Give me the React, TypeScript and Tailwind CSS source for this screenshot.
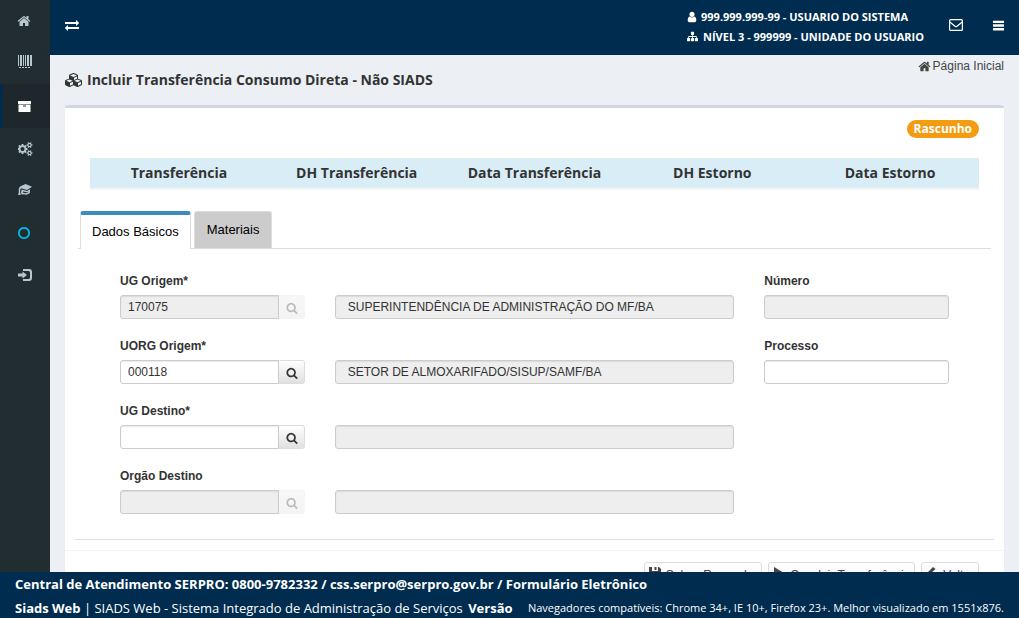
import { ReactNode } from "react";
import clsx from "clsx";

type TIcon = {
  d: string;
  viewBox?: string;
  className?: string;
};

const Icon = ({ d, viewBox = "0 0 1792 1792", className }: TIcon) => (
  <svg viewBox={viewBox} className={clsx("shrink-0", className)} fill="currentColor" aria-hidden="true">
    <path d={d} />
  </svg>
);

const icons = {
  home: "M1472 992v480q0 26-19 45t-45 19h-384v-384h-256v384h-384q-26 0-45-19t-19-45v-480q0-1 .5-3t.5-3l575-474 575 474q1 2 1 6zm223-69l-62 74q-8 9-21 11h-3q-13 0-21-7l-692-577-692 577q-12 8-24 7-13-2-21-11l-62-74q-8-10-7-23.5t11-21.5l719-599q32-26 76-26t76 26l244 204v-195q0-14 9-23t23-9h192q14 0 23 9t9 23v408l219 182q10 8 11 21.5t-7 23.5z",
  barcode: "M0 0h1v11h-1zM2 0h2v11h-2zM5 0h1v11h-1zM7 0h1v11h-1zM9 0h2v11h-2zM12 0h2v11h-2zM1 12h2v1h-2zM4 12h2v1h-2zM7 12h2v1h-2zM10 12h2v1h-2z",
  archive: "M0 0h13v3h-13zM.500 3.500h12v7.500h-12zM5 4.500v1h3v-1z",
  cogs: "M832 896q0-106-75-181t-181-75-181 75-75 181 75 181 181 75 181-75 75-181zm768 512q0-52-38-90t-90-38-90 38-38 90q0 53 37.5 90.5t90.5 37.5 90.5-37.5 37.5-90.5zm0-1024q0-52-38-90t-90-38-90 38-38 90q0 53 37.5 90.5t90.5 37.5 90.5-37.5 37.5-90.5zm-384 421v185q0 10-7 19.5t-16 10.5l-155 24q-11 35-32 76 34 48 90 115 7 10 7 20 0 12-7 19-23 30-82.5 89.5t-78.5 59.5q-11 0-21-7l-115-90q-37 19-77 31-11 108-23 155-7 24-30 24h-186q-11 0-20-7.5t-10-17.5l-23-153q-34-10-75-31l-118 89q-7 7-20 7-11 0-21-8-144-133-144-160 0-9 7-19 10-14 41-53t47-61q-23-44-35-82l-152-24q-10-1-17-9.5t-7-19.5v-185q0-10 7-19.5t16-10.5l155-24q11-35 32-76-34-48-90-115-7-11-7-20 0-12 7-20 22-30 82-89t79-59q11 0 21 7l115 90q34-18 77-32 11-108 23-154 7-24 30-24h186q11 0 20 7.5t10 17.5l23 153q34 10 75 31l118-89q8-7 20-7 11 0 21 8 144 133 144 160 0 9-7 19-12 16-42 54t-45 60q23 48 34 82l152 23q10 2 17 10.5t7 19.5zm640 533v140q0 16-149 31-12 27-30 52 51 113 51 138 0 4-4 7-122 71-124 71-8 0-46-47t-52-68q-20 2-30 2t-30-2q-14 21-52 68t-46 47q-2 0-124-71-4-3-4-7 0-25 51-138-18-25-30-52-149-15-149-31v-140q0-16 149-31 13-29 30-52-51-113-51-138 0-4 4-7 4-2 35-20t59-34 30-16q8 0 46 46.5t52 67.5q20-2 30-2t30 2q51-71 92-112l6-2q4 0 124 70 4 3 4 7 0 25-51 138 17 23 30 52 149 15 149 31zm0-1024v140q0 16-149 31-12 27-30 52 51 113 51 138 0 4-4 7-122 71-124 71-8 0-46-47t-52-68q-20 2-30 2t-30-2q-14 21-52 68t-46 47q-2 0-124-71-4-3-4-7 0-25 51-138-18-25-30-52-149-15-149-31v-140q0-16 149-31 13-29 30-52-51-113-51-138 0-4 4-7 4-2 35-20t59-34 30-16q8 0 46 46.5t52 67.5q20-2 30-2t30 2q51-71 92-112l6-2q4 0 124 70 4 3 4 7 0 25-51 138 17 23 30 52 149 15 149 31z",
  education: "M7.500 0L14 2.800L9 6L3 4.200L2.200 5.500V8.500L2.800 11L0 11L.8 8.500V4.500L2 2.600zM3.600 5.400L9 7L12 5.300V8.600C10.500 10.600 8 11.200 6.200 10.200L4.200 10.400L3 9.400zM5 7.500L4.800 8.600L6 9C8 9.400 9.600 9 10.400 8V7.500L9 8.200z",
  circle: "M896 352q-148 0-273 73t-198 198-73 273 73 273 198 198 273 73 273-73 198-198 73-273-73-273-198-198-273-73zm768 544q0 209-103 385.5t-279.5 279.5-385.5 103-385.5-103-279.5-279.5-103-385.5 103-385.5 279.5-279.5 385.5-103 385.5 103 279.5 279.5 103 385.5z",
  logIn: "M5 0h6q3 0 3 3v6q0 3-3 3h-6v-2h5.500q1.500 0 1.500-1.500v-5q0-1.500-1.500-1.500h-5.500zM4.500 2.500l4.500 3.500l-4.500 3.500v-2h-4.500v-3h4.500z",
  exchange: "M1792 1184v192q0 13-9.5 22.5t-22.5 9.5h-1376v192q0 13-9.5 22.5t-22.5 9.5q-12 0-24-10l-319-320q-9-9-9-22 0-14 9-23l320-320q9-9 23-9 13 0 22.5 9.5t9.5 22.5v192h1376q13 0 22.5 9.5t9.5 22.5zm0-544q0 14-9 23l-320 320q-9 9-23 9-13 0-22.5-9.5t-9.5-22.5v-192h-1376q-13 0-22.5-9.5t-9.5-22.5v-192q0-13 9.5-22.5t22.5-9.5h1376v-192q0-14 9-23t23-9q12 0 24 10l319 319q9 9 9 23z",
  user: "M1536 1399q0 109-62.5 187t-150.5 78h-854q-88 0-150.5-78t-62.5-187q0-85 8.5-160.5t31.5-152 58.5-131 94-89 134.5-34.5q131 128 313 128t313-128q76 0 134.5 34.5t94 89 58.5 131 31.5 152 8.5 160.5zm-256-887q0 159-112.5 271.5t-271.5 112.5-271.5-112.5-112.5-271.5 112.5-271.5 271.5-112.5 271.5 112.5 112.5 271.5z",
  sitemap: "M1792 1248v320q0 40-28 68t-68 28h-320q-40 0-68-28t-28-68v-320q0-40 28-68t68-28h96v-192h-512v192h96q40 0 68 28t28 68v320q0 40-28 68t-68 28h-320q-40 0-68-28t-28-68v-320q0-40 28-68t68-28h96v-192h-512v192h96q40 0 68 28t28 68v320q0 40-28 68t-68 28h-320q-40 0-68-28t-28-68v-320q0-40 28-68t68-28h96v-192q0-52 38-90t90-38h512v-192h-96q-40 0-68-28t-28-68v-320q0-40 28-68t68-28h320q40 0 68 28t28 68v320q0 40-28 68t-68 28h-96v192h512q52 0 90 38t38 90v192h96q40 0 68 28t28 68z",
  bars: "M1664 1312v192q0 26-19 45t-45 19h-1408q-26 0-45-19t-19-45v-192q0-26 19-45t45-19h1408q26 0 45 19t19 45zm0-512v192q0 26-19 45t-45 19h-1408q-26 0-45-19t-19-45v-192q0-26 19-45t45-19h1408q26 0 45 19t19 45zm0-512v192q0 26-19 45t-45 19h-1408q-26 0-45-19t-19-45v-192q0-26 19-45t45-19h1408q26 0 45 19t19 45z",
  cubes: "M640 1632l384-192v-314l-384 164v342zm-64-454l404-173-404-173-404 173zm1088 454l384-192v-314l-384 164v342zm-64-454l404-173-404-173-404 173zm-448-293l384-165v-266l-384 164v267zm-64-379l441-189-441-189-441 189zm1088 518v416q0 36-19 67t-52 47l-448 224q-25 14-57 14t-57-14l-448-224q-5-2-7-4-2 2-7 4l-448 224q-25 14-57 14t-57-14l-448-224q-33-16-52-47t-19-67v-416q0-38 21.5-70t56.5-48l434-186v-400q0-38 21.5-70t56.5-48l448-192q23-10 50-10t50 10l448 192q35 16 56.5 48t21.5 70v400l434 186q36 16 57 48t21 70z",
  search: "M1216 832q0-185-131.5-316.5t-316.5-131.5-316.5 131.5-131.5 316.5 131.5 316.5 316.5 131.5 316.5-131.5 131.5-316.5zm512 832q0 52-38 90t-90 38q-54 0-90-38l-343-342q-179 124-399 124-143 0-273.5-55.5t-225-150-150-225-55.5-273.5 55.5-273.5 150-225 225-150 273.5-55.5 273.5 55.5 225 150 150 225 55.5 273.5q0 220-124 399l343 343q37 37 37 90z",
  save: "M0 0h3v4h6v-4h1l2 2v10h-12zM5.500 0h2v3h-2z",
  play: "M1 0l10 6l-10 6z",
  back: "M7 0l2.500 2l-4.500 4l4.500 4l-2.500 2l-6-6z",
};

const menu = [
  { label: "Início", d: icons.home, size: "size-[14px] -ml-px", viewBox: "0 0 1792 1792" },
  { label: "Código de barras", d: icons.barcode, size: "w-[14px] h-[13px] mb-1", viewBox: "0 0 14 13" },
  { label: "Almoxarifado", d: icons.archive, size: "w-[13px] h-[11px]", viewBox: "0 0 13 11", active: true },
  { label: "Configurações", d: icons.cogs, size: "w-[15px] h-[14px]", viewBox: "0 0 1920 1792" },
  { label: "Treinamento", d: icons.education, size: "w-[14px] h-[11px] mb-1", viewBox: "0 0 14 11" },
  { label: "Ambiente", d: icons.circle, size: "size-[14px] -ml-px text-[#00c0ef]", viewBox: "0 0 1792 1792" },
  { label: "Sair", d: icons.logIn, size: "w-[14px] h-[12px]", viewBox: "0 0 14 12" },
];

const columns = ["Transferência", "DH Transferência", "Data Transferência", "DH Estorno", "Data Estorno"];

const inputStyle =
  "block h-6 w-full min-w-0 rounded-[3px] border border-[#ccc] bg-white text-xs text-[#333] shadow-[inset_0_1px_1px_rgba(0,0,0,0.08)] outline-none disabled:bg-[#eee]";

type TField = {
  id: string;
  label: string;
  value?: string;
  disabled?: boolean;
};

const Field = ({ id, label, children }: { id: string; label: string; children: ReactNode }) => (
  <div>
    <label htmlFor={id} className="mb-1 block text-xs leading-5 font-bold">
      {label}
    </label>
    {children}
  </div>
);

const SearchField = ({ id, label, value, disabled }: TField) => (
  <Field id={id} label={label}>
    <div className="flex">
      <input id={id} defaultValue={value} disabled={disabled} className={clsx(inputStyle, "rounded-r-none px-[7px]")} />
      <button
        type="button"
        aria-label={`Pesquisar ${label}`}
        disabled={disabled}
        className="flex h-6 w-[26px] shrink-0 items-center justify-center rounded-r-[3px] border border-l-0 border-[#ddd] bg-linear-to-b from-white to-[#e0e0e0] pt-0.5 pl-px disabled:border-[#f4f4f4] disabled:from-[#f7f7f7] disabled:to-[#f4f4f4] disabled:text-[#bbb]"
      >
        <Icon d={icons.search} className="size-3" />
      </button>
    </div>
  </Field>
);

const Description = ({ label, value }: { label: string; value?: string }) => (
  <div className="col-span-2 flex items-end">
    <input aria-label={label} defaultValue={value} disabled className={clsx(inputStyle, "px-3")} />
  </div>
);

const ActionButton = ({ d, children }: { d: string; children: ReactNode }) => (
  <button
    type="button"
    className="flex h-[26px] items-center gap-[5px] rounded-[3px] border border-[#ddd] bg-linear-to-b from-white to-[#eee] px-1 text-xs whitespace-nowrap text-[#444]"
  >
    <Icon d={d} viewBox="0 0 12 12" className="mb-1 size-3" />
    {children}
  </button>
);

const App = () => {
  return (
    <div className="flex h-screen flex-col bg-[#ecf0f5] font-['Liberation_Sans',Arial,sans-serif] text-[#333]">
      <div className="flex min-h-0 flex-1 overflow-hidden">
        <nav className="w-[50px] shrink-0 bg-[#222d32] text-[#b8c7ce]">
          {menu.map((item) => (
            <a
              key={item.label}
              href="#"
              aria-label={item.label}
              className={clsx(
                "flex items-center border-l-3 pl-[15px]",
                item.active ? "h-11 border-[#002b4e] bg-[#1e282c] text-white" : "h-[42px] border-transparent"
              )}
            >
              <Icon d={item.d} viewBox={item.viewBox} className={item.size} />
            </a>
          ))}
        </nav>

        <div className="min-w-0 flex-1">
          <header className="flex h-[55px] items-center bg-[#002c4f] pr-[14px] pb-[5px] pl-[15px] font-['Open_Sans',sans-serif] text-white">
            <button type="button" aria-label="Alternar menu">
              <Icon d={icons.exchange} className="size-[14px]" />
            </button>
            <div className="mr-[25px] ml-auto pt-[3px] text-[11px] leading-5 font-bold">
              <div className="flex items-center gap-[3px]">
                <Icon d={icons.user} className="-ml-px size-3" />
                999.999.999-99 - USUARIO DO SISTEMA
              </div>
              <div className="flex items-center gap-[5px]">
                <Icon d={icons.sitemap} className="size-[11px]" />
                NÍVEL 3 - 999999 - UNIDADE DO USUARIO
              </div>
            </div>
            <button type="button" aria-label="Mensagens">
              <svg viewBox="0 0 14 12" className="h-3 w-[14px]" fill="none" stroke="currentColor" strokeWidth="1.2">
                <rect x=".6" y=".6" width="12.8" height="10.8" rx="1" />
                <path d="M.8 3L6 7.200Q7 8 8 7.200L13.200 3" />
              </svg>
            </button>
            <button type="button" aria-label="Opções" className="ml-[29px]">
              <Icon d={icons.bars} className="size-[13px]" />
            </button>
          </header>

          <main className="px-[15px]">
            <div className="flex h-[50px] items-start justify-between">
              <h1 className="mt-[15px] flex items-center gap-1 font-['Open_Sans',sans-serif] text-sm leading-5 font-bold">
                <Icon d={icons.cubes} viewBox="0 0 2304 1792" className="h-[14px] w-[18px]" />
                Incluir Transferência Consumo Direta - Não SIADS
              </h1>
              <a href="#" className="mt-px flex items-center gap-0.5 text-xs leading-5 text-[#444]">
                <Icon d={icons.home} className="size-[13px]" />
                Página Inicial
              </a>
            </div>

            <section className="rounded-[3px] border-t-3 border-[#d2d6de] bg-white shadow-[0_1px_1px_rgba(0,0,0,0.1)]">
              <div className="px-[25px] pt-3 font-['Open_Sans',sans-serif] font-bold">
                <div className="flex justify-end">
                  <span className="rounded-full bg-[#f39c12] px-[7px] text-xs leading-[18px] text-white">Rascunho</span>
                </div>
                <div className="mt-5 border-b-2 border-[#f4f4f4]">
                  <table className="w-full table-fixed text-sm leading-5">
                    <thead>
                      <tr className="bg-[#d9edf7]">
                        {columns.map((column) => (
                          <th key={column} className="h-[30px] p-0">
                            {column}
                          </th>
                        ))}
                      </tr>
                    </thead>
                  </table>
                </div>
              </div>

              <div
                className="mx-[13px] mt-[21px] flex h-[38px] gap-[3px] border-b border-[#ddd] pl-0.5 text-[13px] text-black"
                role="tablist"
              >
                <button
                  type="button"
                  role="tab"
                  aria-selected="true"
                  className="-mb-px rounded-t-[3px] border-x border-t-4 border-x-[#ddd] border-t-[#3c8dbc] bg-white px-[11px]"
                >
                  Dados Básicos
                </button>
                <button
                  type="button"
                  role="tab"
                  aria-selected="false"
                  className="rounded-t-[3px] border border-b-0 border-[#ddd] bg-[#ccc] px-3"
                >
                  Materiais
                </button>
              </div>

              <form className="px-[55px] pt-[22px] pb-[25px]">
                <div className="grid grid-cols-4 gap-x-[30px] gap-y-[17px]">
                  <SearchField id="ug-origem" label="UG Origem*" value="170075" disabled />
                  <Description label="Nome da UG Origem" value="SUPERINTENDÊNCIA DE ADMINISTRAÇÃO DO MF/BA" />
                  <Field id="numero" label="Número">
                    <input id="numero" disabled className={clsx(inputStyle, "px-[7px]")} />
                  </Field>
                  <SearchField id="uorg-origem" label="UORG Origem*" value="000118" />
                  <Description label="Nome da UORG Origem" value="SETOR DE ALMOXARIFADO/SISUP/SAMF/BA" />
                  <Field id="processo" label="Processo">
                    <input id="processo" className={clsx(inputStyle, "px-[7px]")} />
                  </Field>
                  <SearchField id="ug-destino" label="UG Destino*" />
                  <Description label="Nome da UG Destino" />
                  <div />
                  <SearchField id="orgao-destino" label="Orgão Destino" disabled />
                  <Description label="Nome do Orgão Destino" />
                </div>
              </form>

              <hr className="mx-2.5 mb-2.5 border-[#ddd]" />
              <div className="flex justify-end gap-1.5 border-t border-[#f4f4f4] px-[25px] py-[11px]">
                <ActionButton d={icons.save}>Salvar Rascunho</ActionButton>
                <ActionButton d={icons.play}>Concluir Transferência</ActionButton>
                <ActionButton d={icons.back}>Voltar</ActionButton>
              </div>
            </section>
          </main>
        </div>
      </div>

      <footer className="shrink-0 bg-[#002c4f] px-[15px] font-['Open_Sans',sans-serif] text-[13px] leading-6 text-white">
        <div className="h-6 font-bold">
          Central de Atendimento SERPRO: 0800-9782332 / <a href="#">css.serpro@serpro.gov.br</a> /{" "}
          <a href="#">Formulário Eletrônico</a>
        </div>
        <div className="flex h-[22px] justify-between whitespace-nowrap">
          <p>
            <b>Siads Web</b> | SIADS Web - Sistema Integrado de Administração de Serviços <b className="ml-0.5">Versão</b>
          </p>
          <p className="text-[11px]">Navegadores compatíveis: Chrome 34+, IE 10+, Firefox 23+. Melhor visualizado em 1551x876.</p>
        </div>
      </footer>
    </div>
  );
};

export default App;
